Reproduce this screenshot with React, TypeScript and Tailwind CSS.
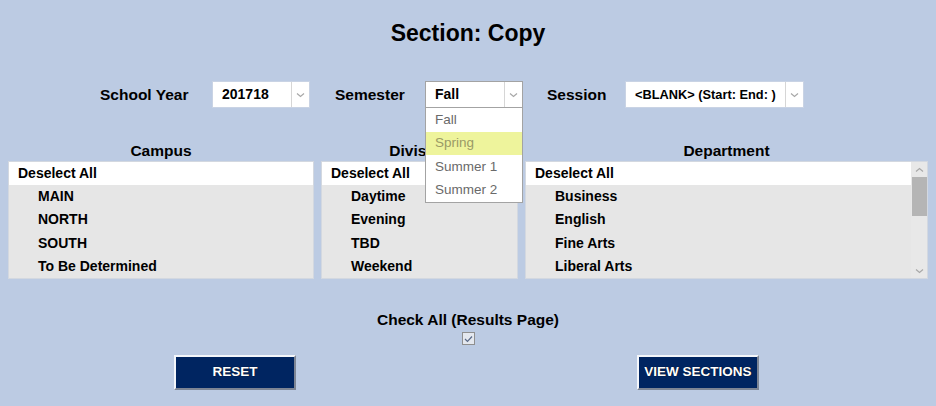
import React from "react";

const Chevron = ({ className = "" }: { className?: string }) => (
  <svg width="9" height="6" viewBox="0 0 9 6" className={className}>
    <path d="M1 1.5 L4.5 4.5 L8 1.5" fill="none" stroke="#a8a8a8" strokeWidth="1.2" />
  </svg>
);

const ChevronUp = () => (
  <svg width="9" height="6" viewBox="0 0 9 6">
    <path d="M1 4.5 L4.5 1.5 L8 4.5" fill="none" stroke="#a8a8a8" strokeWidth="1.2" />
  </svg>
);

function Select({
  value,
  width,
  focused = false,
  textSize = "text-[14px]",
}: {
  value: string;
  width: string;
  focused?: boolean;
  textSize?: string;
}) {
  return (
    <div
      className={`flex h-[27px] bg-white ${width} ${
        focused ? "border border-[#a3a3a3]" : "border border-[#c9d3e4]"
      }`}
    >
      <div
        className={`flex flex-1 items-center overflow-hidden whitespace-nowrap pl-[9px] font-bold text-black ${textSize}`}
      >
        {value}
      </div>
      <div className="flex w-[18px] shrink-0 items-center justify-center border-l border-[#d6d6d6]">
        <Chevron />
      </div>
    </div>
  );
}

function ListBox({
  title,
  items,
  width,
  scroll = false,
}: {
  title: string;
  items: string[];
  width: string;
  scroll?: boolean;
}) {
  return (
    <div className={`flex flex-col ${width}`}>
      <div className="flex h-[20px] items-center justify-center text-[15.5px] font-bold text-black">{title}</div>
      <div className="flex h-[118px] border border-[#d3d8e0] bg-[#e6e6e6]">
        <div className="flex flex-1 flex-col">
          <div className="flex h-[23px] items-center bg-white pl-[9px] text-[14px] font-bold text-black">
            Deselect All
          </div>
          {items.map((it) => (
            <div key={it} className="flex h-[23.5px] items-center pl-[29px] text-[14px] font-bold text-black">
              {it}
            </div>
          ))}
        </div>
        {scroll && (
          <div className="flex w-[16px] flex-col items-center bg-[#e8e8e8]">
            <div className="flex h-[15px] items-center justify-center">
              <ChevronUp />
            </div>
            <div className="h-[39px] w-[15px] bg-[#b5b5b5]" />
            <div className="flex-1" />
            <div className="flex h-[15px] items-center justify-center">
              <Chevron />
            </div>
          </div>
        )}
      </div>
    </div>
  );
}

function NavButton({ label }: { label: string }) {
  return (
    <button className="flex h-[35px] w-[122px] items-center justify-center border-2 border-t-[#f4f6fa] border-l-[#f4f6fa] border-b-[#7d8594] border-r-[#7d8594] bg-[#002561] text-[13.5px] font-bold text-white [text-shadow:0_0_1px_#000]">
      {label}
    </button>
  );
}

export default function App() {
  return (
    <div
      className="h-[406px] w-[936px] overflow-hidden bg-[#bccbe3] text-black"
      style={{ fontFamily: '"Liberation Sans", Arial, sans-serif' }}
    >
      <div className="flex h-[66px] items-center justify-center text-[23px] font-bold">Section: Copy</div>

      <div className="mt-[15px] flex h-[27px] items-center pl-[100px]">
        <div className="w-[112px] text-[15.5px] font-bold">School Year</div>
        <Select value="201718" width="w-[98px]" />
        <div className="ml-[25px] w-[90px] text-[15.5px] font-bold">Semester</div>
        <div className="relative">
          <Select value="Fall" width="w-[98px]" focused />
          <div className="absolute left-0 top-[27px] z-10 w-[98px] border border-t-0 border-[#a3a3a3] bg-white text-[13.5px] text-[#6a6a6a]">
            <div className="flex h-[23.5px] items-center pl-[9px]">Fall</div>
            <div className="flex h-[23.5px] items-center bg-[#eef49c] pl-[9px] text-[#9a9a66]">Spring</div>
            <div className="flex h-[23.5px] items-center pl-[9px]">Summer 1</div>
            <div className="flex h-[23.5px] items-center pl-[9px]">Summer 2</div>
          </div>
        </div>
        <div className="ml-[24px] w-[78px] text-[15.5px] font-bold">Session</div>
        <Select value="<BLANK> (Start: End: )" width="w-[179px]" textSize="text-[12.8px]" />
      </div>

      <div className="mt-[33px] flex gap-[7px] px-[8px]">
        <ListBox title="Campus" width="w-[306px]" items={["MAIN", "NORTH", "SOUTH", "To Be Determined"]} />
        <ListBox title="Division" width="w-[197px]" items={["Daytime", "Evening", "TBD", "Weekend"]} />
        <ListBox
          title="Department"
          width="w-[403px]"
          scroll
          items={["Business", "English", "Fine Arts", "Liberal Arts"]}
        />
      </div>

      <div className="mt-[32px] flex flex-col items-center">
        <div className="h-[18px] text-[15.5px] font-bold leading-[18px]">Check All (Results Page)</div>
        <div className="mt-[3px] flex h-[13px] w-[13px] items-center justify-center border border-[#8f8f8f] bg-[#e4e8ef]">
          <svg width="9" height="8" viewBox="0 0 9 8">
            <path d="M1 4 L3.5 6.5 L8 1.5" fill="none" stroke="#5a6a88" strokeWidth="1.2" />
          </svg>
        </div>
      </div>

      <div className="mt-[10px] flex pl-[174px]">
        <NavButton label="RESET" />
        <div className="w-[341px]" />
        <NavButton label="VIEW SECTIONS" />
      </div>
    </div>
  );
}
